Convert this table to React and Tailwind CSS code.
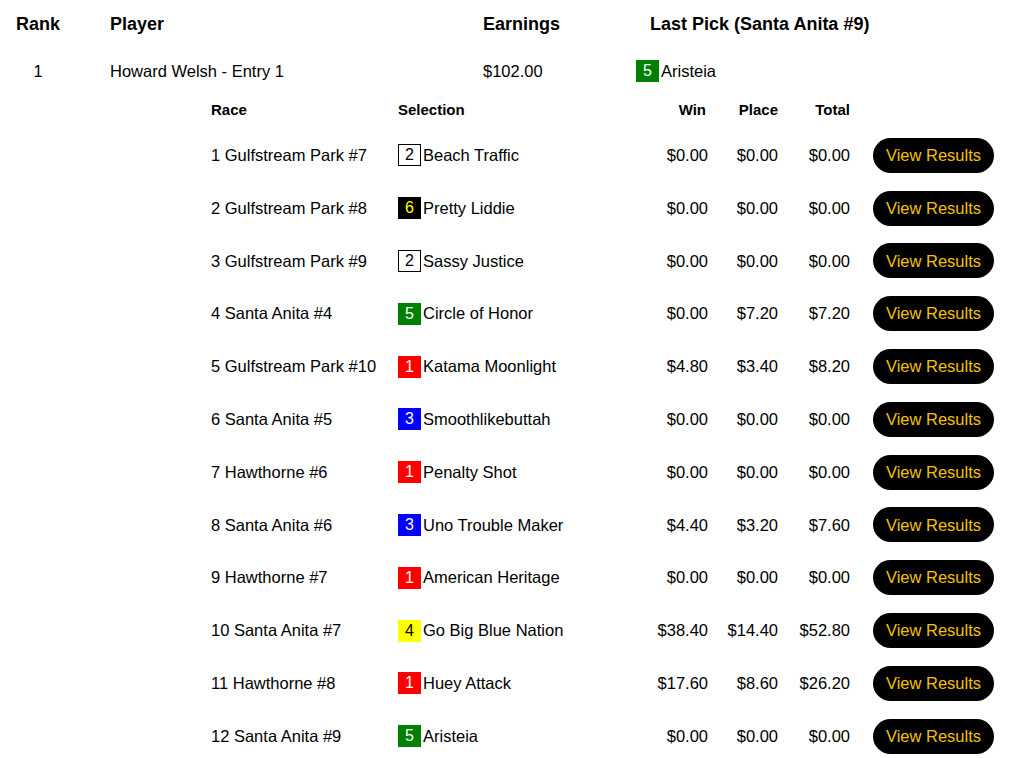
const races = [
  { race: '1 Gulfstream Park #7', num: 2, horse: 'Beach Traffic', win: '$0.00', place: '$0.00', total: '$0.00' },
  { race: '2 Gulfstream Park #8', num: 6, horse: 'Pretty Liddie', win: '$0.00', place: '$0.00', total: '$0.00' },
  { race: '3 Gulfstream Park #9', num: 2, horse: 'Sassy Justice', win: '$0.00', place: '$0.00', total: '$0.00' },
  { race: '4 Santa Anita #4', num: 5, horse: 'Circle of Honor', win: '$0.00', place: '$7.20', total: '$7.20' },
  { race: '5 Gulfstream Park #10', num: 1, horse: 'Katama Moonlight', win: '$4.80', place: '$3.40', total: '$8.20' },
  { race: '6 Santa Anita #5', num: 3, horse: 'Smoothlikebuttah', win: '$0.00', place: '$0.00', total: '$0.00' },
  { race: '7 Hawthorne #6', num: 1, horse: 'Penalty Shot', win: '$0.00', place: '$0.00', total: '$0.00' },
  { race: '8 Santa Anita #6', num: 3, horse: 'Uno Trouble Maker', win: '$4.40', place: '$3.20', total: '$7.60' },
  { race: '9 Hawthorne #7', num: 1, horse: 'American Heritage', win: '$0.00', place: '$0.00', total: '$0.00' },
  { race: '10 Santa Anita #7', num: 4, horse: 'Go Big Blue Nation', win: '$38.40', place: '$14.40', total: '$52.80' },
  { race: '11 Hawthorne #8', num: 1, horse: 'Huey Attack', win: '$17.60', place: '$8.60', total: '$26.20' },
  { race: '12 Santa Anita #9', num: 5, horse: 'Aristeia', win: '$0.00', place: '$0.00', total: '$0.00' },
];

// saddle cloth colours
const clothColors = {
  1: 'bg-[#ff0000] text-white',
  2: 'bg-white text-black border border-black',
  3: 'bg-[#0000ff] text-white',
  4: 'bg-[#ffff00] text-black',
  5: 'bg-[#008000] text-white',
  6: 'bg-black text-[#ffff00]',
};

function Cloth({ num }) {
  return (
    <span
      className={`inline-flex h-[22px] w-[23px] shrink-0 items-center justify-center text-[16px] leading-none ${clothColors[num]}`}
    >
      {num}
    </span>
  );
}

function Selection({ num, horse }) {
  return (
    <div className="flex items-center gap-[2px]">
      <Cloth num={num} />
      <span>{horse}</span>
    </div>
  );
}

export default function App() {
  return (
    <div
      className="min-h-[758px] w-[1024px] bg-white text-black"
      style={{ fontFamily: '"Liberation Sans", Arial, sans-serif' }}
    >
      <div className="flex h-[48px] items-center text-[18px] font-bold">
        <div className="w-[76px] text-center">Rank</div>
        <div className="w-[373px] pl-[34px]">Player</div>
        <div className="w-[153px] pl-[34px]">Earnings</div>
        <div className="pl-[48px]">Last Pick (Santa Anita #9)</div>
      </div>

      <div className="flex h-[46px] items-center text-[16.5px]">
        <div className="w-[76px] text-center">1</div>
        <div className="w-[373px] pl-[34px]">Howard Welsh - Entry 1</div>
        <div className="w-[153px] pl-[34px]">$102.00</div>
        <div className="pl-[34px]">
          <Selection num={5} horse="Aristeia" />
        </div>
      </div>

      <div className="pl-[211px]">
        <div className="flex h-[34px] items-center pb-[2px] text-[15px] font-bold">
          <div className="w-[187px]">Race</div>
          <div className="w-[225px]">Selection</div>
          <div className="w-[83px] text-right">Win</div>
          <div className="w-[72px] text-right">Place</div>
          <div className="w-[72px] text-right">Total</div>
        </div>

        <div className="pt-[1px]">
          {races.map((r) => (
            <div key={r.race} className="flex h-[52.8px] items-center text-[16.5px]">
              <div className="w-[187px]">{r.race}</div>
              <div className="w-[225px]">
                <Selection num={r.num} horse={r.horse} />
              </div>
              <div className="w-[85px] text-right">{r.win}</div>
              <div className="w-[70px] text-right">{r.place}</div>
              <div className="w-[72px] text-right">{r.total}</div>
              <button className="ml-[23px] h-[35px] w-[121px] rounded-full bg-black text-[16.5px] text-[#f2c200]">
                View Results
              </button>
            </div>
          ))}
        </div>
      </div>
    </div>
  );
}
